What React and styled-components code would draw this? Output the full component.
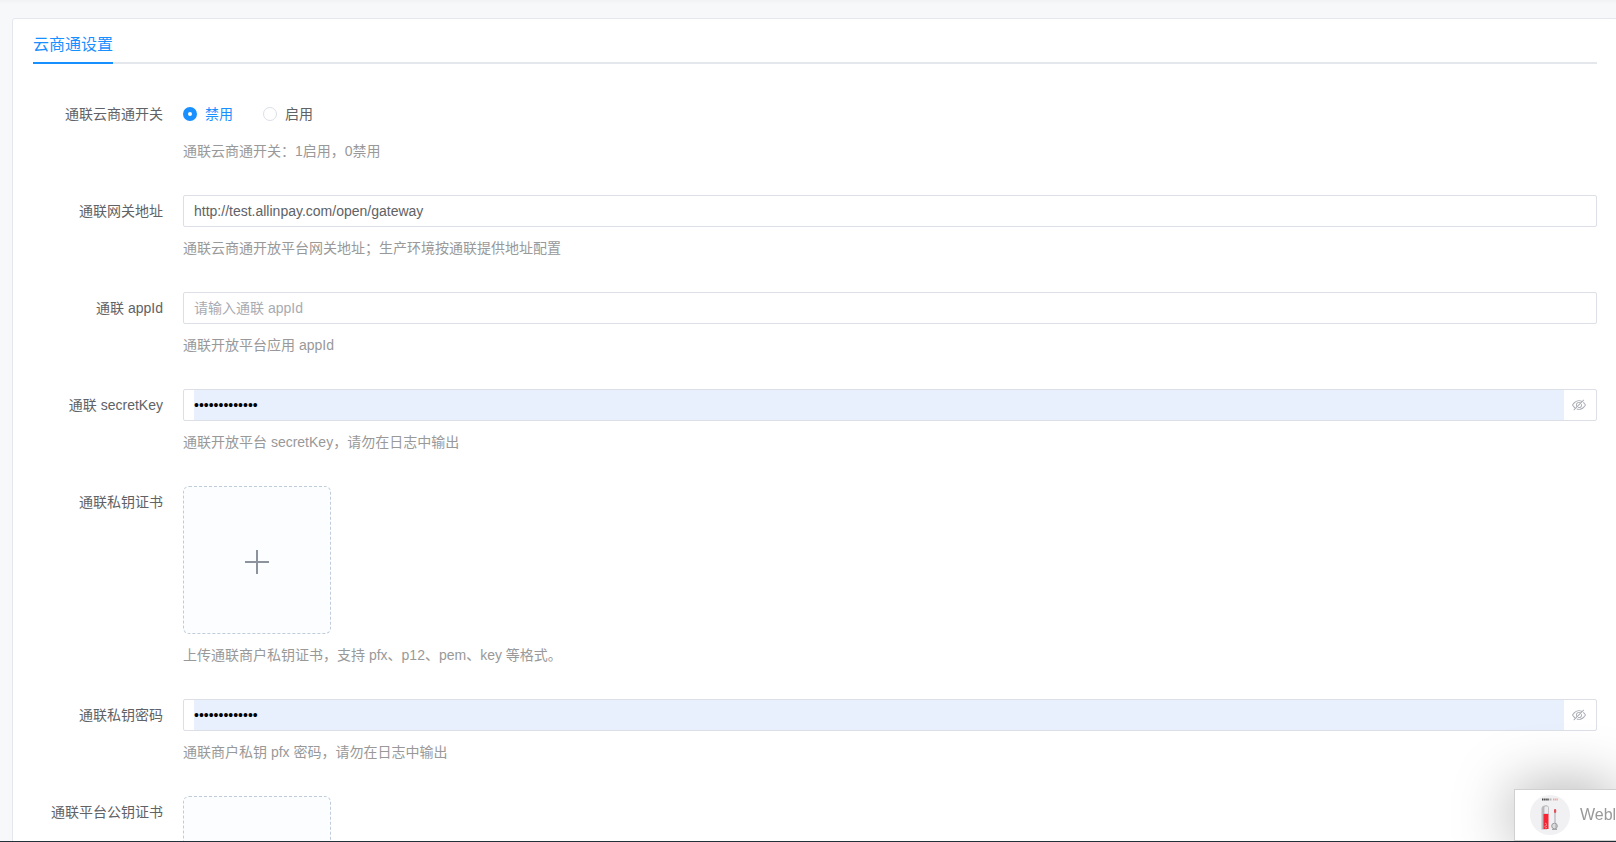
import React, { useState } from 'react';
import styled, { createGlobalStyle } from 'styled-components';

const GlobalStyle = createGlobalStyle`
  *, *::before, *::after {
    box-sizing: border-box;
  }

  body {
    margin: 0;
    font-family: "Liberation Sans", "Noto Sans CJK SC", sans-serif;
    font-size: 14px;
    color: #606266;
  }
`;

const Page = styled.div`
  height: 100vh;
  overflow: hidden;
  padding: 18px 0 0 12px;
  background: linear-gradient(#f0f2f3, #f6f8fa 4px);
  border-bottom: 1px solid #22303a;
`;

const Card = styled.main`
  margin-right: -2px;
  padding: 8px 20px 20px;
  background: #fff;
  border: 1px solid #e4e7ed;
  border-radius: 3px;
`;

const TabBar = styled.div`
  display: flex;
  margin-bottom: 34px;
  box-shadow: inset 0 -2px 0 #e4e8ec;
`;

const Tab = styled.button`
  height: 37px;
  padding: 0;
  border: 0;
  border-bottom: 2px solid #1890ff;
  background: none;
  color: #1890ff;
  font: inherit;
  font-size: 16px;
  line-height: 34px;
  cursor: pointer;
`;

const FormItem = styled.div`
  display: flex;
  margin-bottom: 33px;
`;

const ItemLabel = styled.label`
  flex: 0 0 150px;
  padding-right: 20px;
  line-height: 32px;
  text-align: right;
  white-space: nowrap;
`;

const ItemContent = styled.div`
  flex: 1;
  min-width: 0;
`;

const Help = styled.p`
  margin: 10px 0 0;
  color: #999;
  line-height: 22px;
`;

const RadioGroup = styled.div`
  display: flex;
  gap: 30px;
`;

const RadioLabel = styled.label`
  display: flex;
  align-items: center;
  gap: 8px;
  line-height: 32px;
  color: ${props => (props.$checked ? '#1890ff' : '#606266')};
  cursor: pointer;
`;

const RadioInput = styled.input`
  appearance: none;
  width: 14px;
  height: 14px;
  margin: 0;
  border: 1px solid #dcdfe6;
  border-radius: 50%;
  background: #fff;

  &:checked {
    border: 5px solid #1890ff;
  }
`;

const InputBox = styled.div`
  display: flex;
  height: 32px;
  padding-left: 10px;
  border: 1px solid #dcdfe6;
  border-radius: 2px;
  background: #fff;
`;

const TextInput = styled.input`
  flex: 1;
  min-width: 0;
  padding: 0;
  border: 0;
  outline: none;
  background: ${props => (props.$filled ? '#e8f0fe' : 'transparent')};
  color: ${props => (props.$filled ? '#000' : '#606266')};
  font: inherit;

  &::placeholder {
    color: #a8abb2;
  }
`;

const EyeButton = styled.button`
  display: flex;
  align-items: center;
  width: 32px;
  padding: 0 0 0 8px;
  border: 0;
  background: none;
  color: #a8abb2;
  cursor: pointer;
`;

const UploadButton = styled.button`
  display: flex;
  align-items: center;
  justify-content: center;
  width: 148px;
  height: 148px;
  padding: 4px 0 0;
  border: 1px dashed #c0ccda;
  border-radius: 6px;
  background: #fbfdff;
  color: #8c939d;
  cursor: pointer;
`;

const ChatBar = styled.aside`
  position: fixed;
  right: 0;
  bottom: 1px;
  display: flex;
  align-items: center;
  gap: 10px;
  width: 102px;
  height: 52px;
  padding-left: 15px;
  overflow: hidden;
  border: 1px solid #d0d0d0;
  border-right: 0;
  background: #fff;
  box-shadow: 0 0 60px rgba(0, 0, 0, 0.36);
`;

const ChatName = styled.span`
  color: #999;
  font-size: 16px;
`;

const AvatarArt = styled.svg`
  flex: none;
`;

function HideIcon() {
  return (
    <svg width="14" height="14" viewBox="0 0 1024 1024" fill="currentColor" aria-hidden="true">
      <path d="M876.8 156.8c0-9.6-3.2-16-9.6-22.4-6.4-6.4-12.8-9.6-22.4-9.6-9.6 0-16 3.2-22.4 9.6L736 220.8c-64-32-137.6-51.2-224-60.8-160 16-288 73.6-377.6 176C44.8 438.4 0 496 0 512s48 73.6 134.4 176c22.4 25.6 44.8 48 73.6 67.2l-86.4 89.6c-6.4 6.4-9.6 12.8-9.6 22.4 0 9.6 3.2 16 9.6 22.4 6.4 6.4 12.8 9.6 22.4 9.6 9.6 0 16-3.2 22.4-9.6l704-710.4c3.2-6.4 6.4-12.8 6.4-22.4Zm-646.4 528c-76.8-70.4-128-128-153.6-172.8 28.8-48 80-105.6 153.6-172.8C304 272 400 230.4 512 224c64 3.2 124.8 19.2 176 44.8l-54.4 54.4C598.4 300.8 560 288 512 288c-64 0-115.2 22.4-160 64s-64 96-64 160c0 48 12.8 89.6 35.2 124.8L256 707.2c-9.6-6.4-19.2-16-25.6-22.4Zm140.8-96c-12.8-22.4-19.2-48-19.2-76.8 0-44.8 16-83.2 48-112 32-28.8 67.2-48 112-48 28.8 0 54.4 6.4 73.6 19.2L371.2 588.8ZM889.6 336c-12.8-16-28.8-28.8-41.6-41.6l-48 48c73.6 67.2 124.8 124.8 150.4 169.6-28.8 48-80 105.6-153.6 172.8-73.6 67.2-172.8 108.8-284.8 115.2-51.2-3.2-99.2-12.8-140.8-28.8l-48 48c57.6 22.4 118.4 38.4 188.8 44.8 160-16 288-73.6 377.6-176C979.2 585.6 1024 528 1024 512s-48-73.6-134.4-176Z" />
      <path d="M512 672c-12.8 0-25.6-3.2-38.4-6.4l-51.2 51.2c28.8 12.8 57.6 19.2 89.6 19.2 64 0 115.2-22.4 160-64 41.6-41.6 64-96 64-160 0-32-6.4-64-19.2-89.6l-51.2 51.2c3.2 12.8 6.4 25.6 6.4 38.4 0 44.8-16 83.2-48 112-32 28.8-67.2 48-112 48Z" />
    </svg>
  );
}

function PlusIcon() {
  return (
    <svg width="24" height="24" viewBox="0 0 24 24" stroke="currentColor" strokeWidth="2" aria-hidden="true">
      <path d="M12 0v24M0 12h24" />
    </svg>
  );
}

function Avatar() {
  return (
    <AvatarArt width="40" height="40" viewBox="0 0 40 40" aria-hidden="true">
      <circle cx="20" cy="20" r="20" fill="#f1f1f3" />
      <path d="M12 4.5h7" stroke="#444" strokeWidth="2" strokeDasharray="1.5 .6" />
      <path d="M19.5 4.5h2" stroke="#b5b5b5" strokeWidth="2" />
      <path d="M23 4.5h5" stroke="#eba79e" strokeWidth="2" strokeDasharray="1.5 .6" />
      <path d="M11.5 34.5V14q0-3.500 3.500-3.500h2v24z" fill="#bcbcc0" />
      <path d="M14 19v-6.500q0-1.500 1.500-1.500H17q1.500 0 1.500 1.500V19z" fill="#ececee" stroke="#b0b0b4" strokeWidth=".7" />
      <rect x="13.500" y="19" width="5" height="15" fill="#fa2333" />
      <path d="M15 28l2 1.500M14.500 31.500l2.500-1.500M15 33l2-.5" stroke="#ffb0b0" strokeWidth=".8" />
      <path d="M25 17v11" stroke="#b5b5b9" strokeWidth="1.200" />
      <rect x="24" y="14" width="2.200" height="4" rx="1" fill="#e2525c" />
      <circle cx="24.500" cy="31" r="2.800" fill="#dcdcdf" stroke="#9c9ca0" />
      <path d="M22 34.500h5M26 29v5" stroke="#a8a8ac" />
    </AvatarArt>
  );
}

function PasswordField({ id, value, onChange }) {
  const [visible, setVisible] = useState(false);

  return (
    <InputBox>
      <TextInput
        id={id}
        type={visible ? 'text' : 'password'}
        value={value}
        onChange={onChange}
        $filled
      />
      <EyeButton type="button" aria-label="显示密码" onClick={() => setVisible(!visible)}>
        <HideIcon />
      </EyeButton>
    </InputBox>
  );
}

function Field({ id, label, help, children }) {
  return (
    <FormItem>
      <ItemLabel htmlFor={id}>{label}</ItemLabel>
      <ItemContent>
        {children}
        {help && <Help>{help}</Help>}
      </ItemContent>
    </FormItem>
  );
}

const switchOptions = [
  { value: '0', label: '禁用' },
  { value: '1', label: '启用' },
];

export default function App() {
  const [form, setForm] = useState({
    enabled: '0',
    gateway: 'http://test.allinpay.com/open/gateway',
    appId: '',
    secretKey: 'allinpay12345',
    certPassword: 'allinpay12345',
  });

  const update = (name) => (e) => setForm({ ...form, [name]: e.target.value });

  return (
    <>
      <GlobalStyle />
      <Page>
        <Card>
          <TabBar>
            <Tab type="button">云商通设置</Tab>
          </TabBar>

          <Field id="enabled-0" label="通联云商通开关" help="通联云商通开关：1启用，0禁用">
            <RadioGroup>
              {switchOptions.map(({ value, label }) => (
                <RadioLabel key={value} $checked={form.enabled === value}>
                  <RadioInput
                    id={`enabled-${value}`}
                    type="radio"
                    name="enabled"
                    value={value}
                    checked={form.enabled === value}
                    onChange={update('enabled')}
                  />
                  {label}
                </RadioLabel>
              ))}
            </RadioGroup>
          </Field>

          <Field id="gateway" label="通联网关地址" help="通联云商通开放平台网关地址；生产环境按通联提供地址配置">
            <InputBox>
              <TextInput id="gateway" type="text" value={form.gateway} onChange={update('gateway')} />
            </InputBox>
          </Field>

          <Field id="app-id" label="通联 appId" help="通联开放平台应用 appId">
            <InputBox>
              <TextInput
                id="app-id"
                type="text"
                placeholder="请输入通联 appId"
                value={form.appId}
                onChange={update('appId')}
              />
            </InputBox>
          </Field>

          <Field id="secret-key" label="通联 secretKey" help="通联开放平台 secretKey，请勿在日志中输出">
            <PasswordField id="secret-key" value={form.secretKey} onChange={update('secretKey')} />
          </Field>

          <Field id="private-cert" label="通联私钥证书" help="上传通联商户私钥证书，支持 pfx、p12、pem、key 等格式。">
            <UploadButton id="private-cert" type="button">
              <PlusIcon />
            </UploadButton>
          </Field>

          <Field id="cert-password" label="通联私钥密码" help="通联商户私钥 pfx 密码，请勿在日志中输出">
            <PasswordField id="cert-password" value={form.certPassword} onChange={update('certPassword')} />
          </Field>

          <Field id="public-cert" label="通联平台公钥证书">
            <UploadButton id="public-cert" type="button">
              <PlusIcon />
            </UploadButton>
          </Field>
        </Card>
      </Page>

      <ChatBar>
        <Avatar />
        <ChatName>Webl</ChatName>
      </ChatBar>
    </>
  );
}
